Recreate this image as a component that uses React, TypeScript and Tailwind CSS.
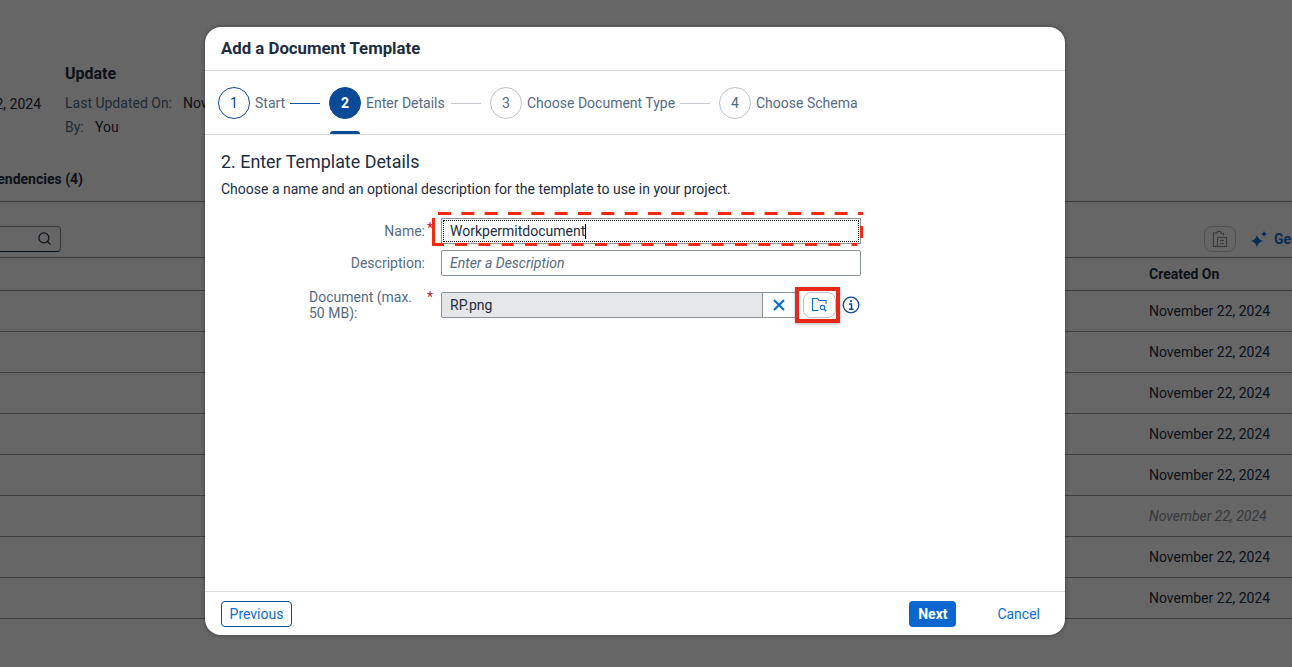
import React from "react";
import { Search } from "lucide-react";

const font = { fontFamily: 'Roboto, "Liberation Sans", sans-serif' };

function Step({ n, label, state, line, labelW }: { n: number; label: string; state: "done" | "active" | "todo"; line?: "blue" | "gray"; labelW: string }) {
    const circle =
        state === "active"
            ? "bg-[#0a4a96] text-white font-bold border-[#0a4a96]"
            : state === "done"
              ? "bg-white text-[#0a4a96] border-[#0a4a96]"
              : "bg-white text-[#556b82] border-[#bcc3ca]";
    return (
        <div className="relative flex h-full items-center">
            <div className={`flex h-8 w-8 shrink-0 items-center justify-center rounded-full border text-sm ${circle}`}>{n}</div>
            <span className={`ml-[5px] whitespace-nowrap text-sm text-[#556b82] ${labelW}`}>{label}</span>
            {line && <div className={`ml-[5px] mr-[9px] mt-px h-px w-[30px] ${line === "blue" ? "bg-[#0f55a8]" : "bg-[#c5cbd1]"}`} />}
            {state === "active" && <div className="absolute bottom-0 left-px h-[3px] w-[30px] rounded-t-sm bg-[#0a4a96]" />}
        </div>
    );
}

function FolderSearchIcon() {
    return (
        <svg width="17" height="16" viewBox="0 0 17 16" fill="none" stroke="#0a6ed1" strokeWidth="1.1">
            <path d="M7.5 13.5H1.5V1.5H6.5L8 3.5H15V7" />
            <circle cx="11.5" cy="10.5" r="2.2" />
            <path d="M13.2 12.2L15.3 14.3" strokeWidth="1.4" />
        </svg>
    );
}

function InfoIcon() {
    return (
        <svg width="18" height="18" viewBox="0 0 18 18" fill="none" stroke="#0a4a96">
            <circle cx="9" cy="9" r="7.8" strokeWidth="1.3" />
            <circle cx="9" cy="5.2" r="1.1" fill="#0a4a96" stroke="none" />
            <path d="M7 8H9.5V13M7 13.2H11.5" strokeWidth="1.5" />
        </svg>
    );
}

function ClipboardIcon() {
    return (
        <svg width="16" height="18" viewBox="0 0 16 18" fill="none" stroke="#8f949a" strokeWidth="1.1">
            <path d="M5 3H1.5V16.5H5" />
            <path d="M5 3.5V2.5C5 1.5 8.5 .5 9 2.5V3.5H11.5V5.5" />
            <rect x="5.5" y="7.5" width="9" height="9" />
            <path d="M8 10.5H12M8 13.5H12" />
        </svg>
    );
}

function SparkleIcon() {
    return (
        <svg width="16" height="16" viewBox="0 0 16 16" fill="#0a70d8">
            <path d="M6 4Q7.2 8.8 12 10Q7.2 11.2 6 16Q4.8 11.2 0 10Q4.8 8.8 6 4Z" />
            <path d="M13 0Q13.5 2.5 16 3Q13.5 3.5 13 6Q12.5 3.5 10 3Q12.5 2.5 13 0Z" />
        </svg>
    );
}

const rows = [false, false, false, false, false, true, false, false];

function Background() {
    return (
        <div className="h-[667px] w-[1292px] overflow-hidden bg-white text-sm text-[#1d2d3e]">
            <div className="flex h-[202px] flex-col border-b border-[#8e9296]">
                <div className="flex pt-[64px]">
                    <div className="flex w-[65px] flex-col">
                        <div className="mt-[30px] flex h-5 w-[41px] justify-end overflow-hidden whitespace-nowrap">November 22, 2024</div>
                    </div>
                    <div className="flex flex-col">
                        <div className="h-5 text-base font-bold leading-5">Update</div>
                        <div className="mt-[9px] flex h-5 items-center">
                            <span className="w-[118px] text-[#556b82]">Last Updated On:</span>
                            <span>November 22, 2024</span>
                        </div>
                        <div className="mt-1 flex h-5 items-center">
                            <span className="w-[30px] text-[#556b82]">By:</span>
                            <span>You</span>
                        </div>
                    </div>
                </div>
                <div className="mt-[32px] flex h-5 w-[83px] justify-end overflow-hidden whitespace-nowrap font-bold">Dependencies (4)</div>
            </div>
            <div className="flex h-[56px] items-center justify-between border-b border-[#8e9296] pt-[18px]">
                <div className="flex h-[26px] w-[61px] items-center justify-end rounded-r border border-l-0 border-[#8e9296] border-b-[#0a2a52] pr-[8px]">
                    <Search size={15} color="#1d2d3e" />
                </div>
                <div className="flex items-center">
                    <div className="flex h-[26px] w-[32px] items-center justify-center rounded-lg border border-[#c5c9cd]">
                        <ClipboardIcon />
                    </div>
                    <div className="ml-[15px] flex w-[41px] items-center gap-[7px] overflow-hidden whitespace-nowrap font-bold text-[#0a6ed1]">
                        <span className="shrink-0"><SparkleIcon /></span>
                        Generate
                    </div>
                </div>
            </div>
            <div className="flex h-[33px] items-center border-b border-[#8a94a0] pl-[1149px] font-bold">Created On</div>
            {rows.map((muted, i) => (
                <div key={i} className={`flex h-[41px] items-center border-b border-[#9c9fa2] pl-[1149px] ${muted ? "italic text-[#8b9196]" : ""}`}>
                    November 22, 2024
                </div>
            ))}
        </div>
    );
}

function Dialog() {
    return (
        <div className="absolute left-[205px] top-[27px] flex h-[608px] w-[860px] flex-col overflow-hidden rounded-2xl bg-white text-sm text-[#1d2d3e] shadow-[0_0_4px_rgba(0,0,0,0.4)]">
            <div className="flex h-11 shrink-0 items-center border-b border-[#d9d9d9] px-4 text-[16.8px] font-bold">Add a Document Template</div>

            <div className="flex h-16 shrink-0 items-center border-b border-[#d9d9d9] pl-[13px]">
                <Step n={1} label="Start" state="done" line="blue" labelW="w-[30px]" />
                <Step n={2} label="Enter Details" state="active" line="gray" labelW="w-[80px]" />
                <Step n={3} label="Choose Document Type" state="todo" line="gray" labelW="w-[148px]" />
                <Step n={4} label="Choose Schema" state="todo" labelW="w-[101px]" />
            </div>

            <div className="flex-1 px-4">
                <h2 className="mt-[15px] h-6 text-[17.9px] leading-6">2. Enter Template Details</h2>
                <p className="mt-[5px] h-5 leading-5">Choose a name and an optional description for the template to use in your project.</p>

                <div className="relative ml-[88px] mt-[19px] grid w-[620px] grid-cols-[116px_16px_420px_1fr] grid-rows-[26px_26px_auto] gap-y-[6px] text-[#556b82]">
                    <label className="self-center text-right">Name:</label>
                    <span className="pl-[2px] text-[#c0191f]">*</span>
                    <div className="relative flex items-center border border-[#89919a] px-2 text-[#1d2d3e]">
                        <div className="absolute inset-px border border-dotted border-black" />
                        Workpermitdocument
                        <span className="h-[15px] w-px bg-black" />
                    </div>
                    <div />

                    <label className="self-center text-right">Description:</label>
                    <span />
                    <div className="flex items-center rounded-[2px] border border-[#89919a] px-2 italic text-[#556b82]">Enter a Description</div>
                    <div />

                    <label className="mt-[7px] leading-[16px]">
                        Document (max.
                        <br />
                        50 MB):
                    </label>
                    <span className="mt-[5px] pl-[2px] text-[#c0191f]">*</span>
                    <div className="mt-[10px] flex h-[26px] w-[420px] items-center">
                        <div className="flex h-full w-[355px] items-stretch overflow-hidden rounded-[2px] border border-[#89919a] bg-[#e5e6e7]">
                            <span className="flex flex-1 items-center px-2 text-[#1d2d3e]">RP.png</span>
                            <span className="flex w-[33px] items-center justify-center border-l border-[#89919a] bg-white text-[#0a6ed1]">
                                <svg width="12" height="12" viewBox="0 0 12 12" stroke="#0a6ed1" strokeWidth="2.2">
                                    <path d="M1 1L11 11M11 1L1 11" />
                                </svg>
                            </span>
                        </div>
                        <div className="ml-[7px] flex h-[26px] w-[33px] items-center justify-center rounded-lg border border-[#bcc3ca] bg-white">
                            <FolderSearchIcon />
                        </div>
                        <span className="ml-[6px]"><InfoIcon /></span>
                    </div>
                    <div />

                    {/* red annotation frames drawn over the form */}
                    <svg className="absolute left-[123px] top-[-6px]" width="432" height="34" fill="none" stroke="#f5290f" strokeWidth="3">
                        <path d="M6 1.5H431" strokeDasharray="13 10.33" />
                        <path d="M1.5 6V32.5H12" />
                        <path d="M23 32.5H425" strokeDasharray="12 11.33" />
                        <path d="M429.5 14V26" />
                    </svg>
                    <div className="absolute left-[486px] top-[69px] h-[36px] w-[45px] border-4 border-[#e8291a] shadow-[0_1px_3px_rgba(0,0,0,0.3)]" />
                </div>
            </div>

            <div className="flex h-[44px] shrink-0 items-center border-t border-[#d9d9d9] px-4">
                <button className="h-[26px] w-[71px] rounded border border-[#0a4a96] text-[#0a6ed1]">Previous</button>
                <button className="ml-auto h-[26px] w-[47px] rounded bg-[#0b66d0] font-bold text-white">Next</button>
                <button className="ml-[41px] mr-[9px] h-[26px] text-[#0a6ed1]">Cancel</button>
            </div>
        </div>
    );
}

export default function App() {
    return (
        <div className="relative h-[667px] w-[1292px] overflow-hidden" style={font}>
            <Background />
            <div className="absolute inset-0 bg-black/60" />
            <Dialog />
        </div>
    );
}
